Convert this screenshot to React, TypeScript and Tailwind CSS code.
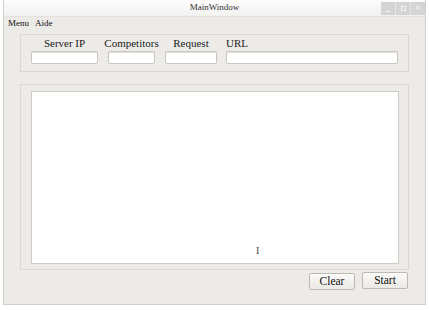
import React from 'react';

const serif = { fontFamily: '"Liberation Serif", "Times New Roman", serif' };

const Field: React.FC<{ label: string; width: string; left?: boolean }> = ({ label, width, left }) => (
  <div className={`flex flex-col ${left ? 'items-start' : 'items-center'} ${width}`}>
    <span className="whitespace-nowrap text-[11px] leading-[14px] text-[#1a1a1a]">{label}</span>
    <div className="mt-[1px] h-[13px] w-full rounded-[2px] border border-[#c9c5bf] bg-white shadow-[inset_0_1px_0_#e4e1dc]" />
  </div>
);

const Btn: React.FC<{ label: string; up?: boolean }> = ({ label, up }) => (
  <button
    className={`h-[17px] w-[46px] rounded-[2px] border border-[#bdb9b3] bg-gradient-to-b from-[#fbfaf9] to-[#ebe9e5] text-[11.5px] leading-none text-[#111] ${up ? '-mt-[1px]' : ''}`}
  >
    {label}
  </button>
);

export default function App() {
  return (
    <div className="h-[310px] w-[429px] overflow-hidden bg-white" style={serif}>
      <div className="ml-[3px] flex h-[305px] w-[423px] flex-col border border-t-0 border-[#d2cfcb] bg-[#edebe8]">
        {/* title bar */}
        <div className="relative flex h-[17px] items-center justify-center bg-gradient-to-b from-[#fdfdfd] to-[#f1f1f0] border-b border-[#e4e2df]">
          <span className="text-[9px] text-[#333]">MainWindow</span>
          <div className="absolute right-0 top-[2px] flex h-[13px] w-[44px] bg-[#d4d4d4]">
            <div className="flex flex-1 items-end justify-center pb-[3px]">
              <div className="h-[1px] w-[4px] bg-[#f5f5f5]" />
            </div>
            <div className="flex flex-1 items-center justify-center border-l border-[#e6e6e6]">
              <div className="h-[5px] w-[5px] border border-[#f5f5f5]" />
            </div>
            <div className="flex flex-1 items-center justify-center border-l border-[#e6e6e6] text-[7px] leading-none text-[#f5f5f5]">
              ✕
            </div>
          </div>
        </div>

        {/* menu bar */}
        <div className="flex h-[13px] items-center gap-[6px] pl-[4px] text-[9px] text-[#111]">
          <span>Menu</span>
          <span>Aide</span>
        </div>

        {/* parameters group */}
        <div className="mx-[16px] mt-[4px] flex h-[38px] border border-[#dad7d2] px-[10px] pt-[1px]">
          <Field label="Server IP" width="w-[67px]" />
          <div className="w-[10px]" />
          <Field label="Competitors" width="w-[47px]" />
          <div className="w-[10px]" />
          <Field label="Request" width="w-[52px]" />
          <div className="w-[9px]" />
          <Field label="URL" width="flex-1" left />
        </div>

        {/* output group */}
        <div className="mx-[16px] mt-[12px] flex h-[186px] flex-col border border-[#dad7d2] pb-[5px] pl-[10px] pr-[9px] pt-[6px]">
          <div className="relative flex-1 border border-[#cfcbc5] bg-white">
            <span className="absolute left-[224px] top-[154px] text-[10px] leading-none text-[#444]">I</span>
          </div>
        </div>

        {/* buttons */}
        <div className="mr-[17px] mt-[3px] flex justify-end gap-[7px]">
          <Btn label="Clear" />
          <Btn label="Start" up />
        </div>
      </div>
    </div>
  );
}
